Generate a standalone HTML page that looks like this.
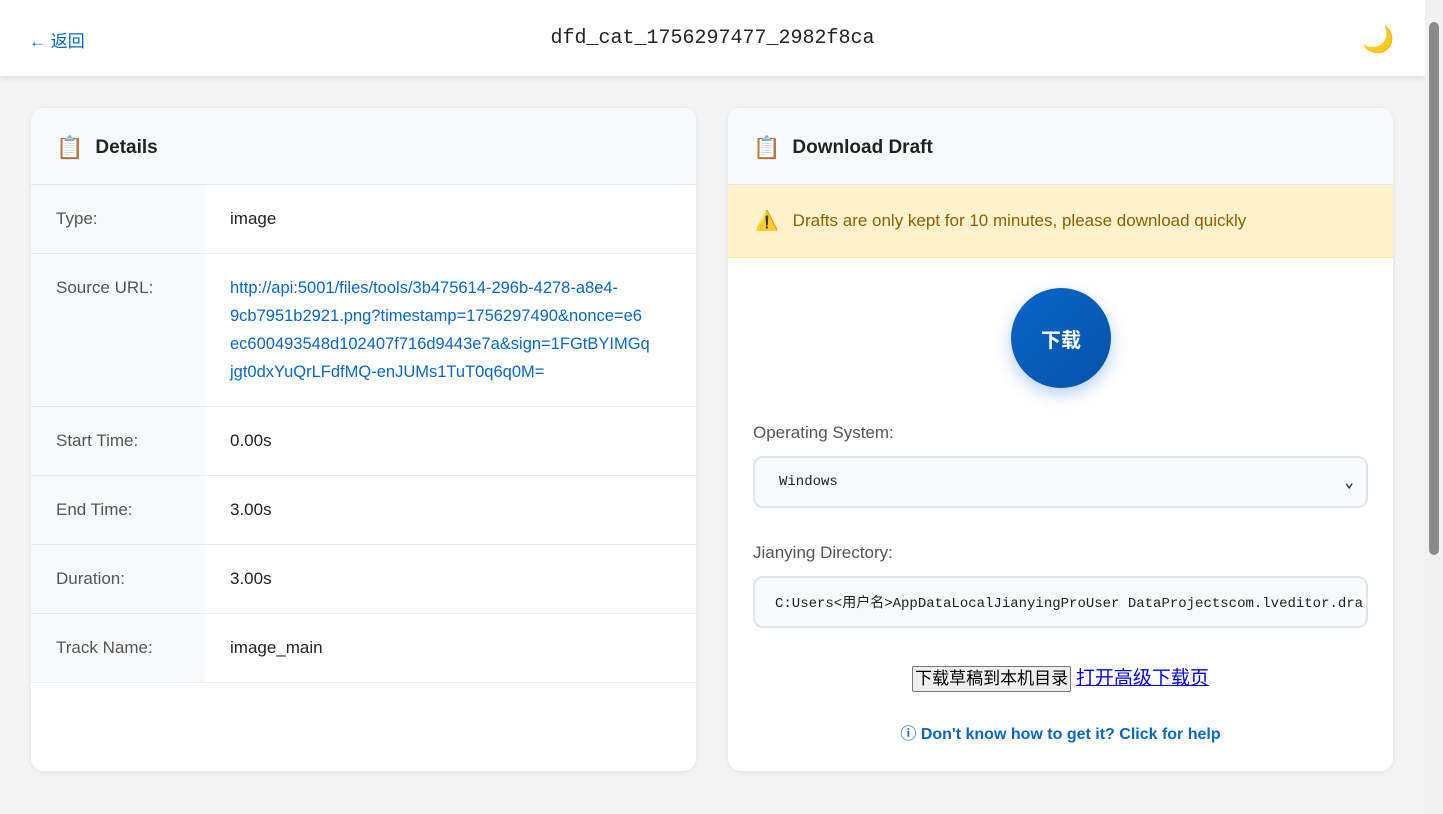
<!DOCTYPE html>
<html><head><meta charset="utf-8"><style>
*{box-sizing:border-box;margin:0;padding:0}
body{width:1443px;height:814px;overflow:hidden;background:#f3f3f3;font-family:"Liberation Sans","Noto Sans CJK SC",sans-serif;position:relative}
.hdr{position:absolute;left:0;top:0;width:1425px;height:76px;background:#fff;box-shadow:0 2px 6px rgba(0,0,0,.1)}
.back{position:absolute;left:29px;top:27px;color:#0b66c2;font-size:17px}
.title{position:absolute;left:0;width:1425px;top:27px;text-align:center;font-family:"Liberation Mono",monospace;font-size:20px;color:#222}
.moon{position:absolute;left:1362px;top:24px;font-size:26px;color:#f5b800}
.sb{position:absolute;left:1425px;top:0;width:18px;height:814px;background:#f1f1f1}
.thumb{position:absolute;left:1429px;top:22px;width:10px;height:533px;background:#8a8a8a;border-radius:5px}
.card{position:absolute;top:108px;width:665px;height:663px;background:#fff;border-radius:12px;box-shadow:0 1px 5px rgba(0,0,0,.08);overflow:hidden}
.ch{height:77px;background:#f8f9fa;border-bottom:1px solid #e3e6ea;display:flex;align-items:center;padding-left:25px;font-size:19px;font-weight:bold;color:#222;padding-top:4px}
.ch span.i{font-size:22px;margin-right:12px}
.row{display:flex;border-bottom:1px solid #e9ecef;font-size:17px}
.row .l{width:174px;background:#f8f9fa;color:#555;padding:19px 25px;line-height:30px}
.row .v{flex:1;padding:19px 25px;color:#222;line-height:28px;padding-top:20px;padding-bottom:20px}
.warn{height:73px;background:#fff3cd;border-bottom:1px solid #ffe69c;display:flex;align-items:center;padding-left:27px;color:#8a6100;font-size:17px}
.btn{position:absolute;left:283px;top:180px;width:100px;height:100px;border-radius:50%;background:linear-gradient(135deg,#0a66c8,#0652a8);box-shadow:0 6px 16px rgba(10,102,200,.3);color:#fff;font-weight:bold;font-size:20px;display:flex;align-items:center;justify-content:center}
.lab{position:absolute;left:25px;font-size:17px;color:#555}
.inp{position:absolute;left:25px;width:615px;height:52px;border:2px solid #e0e3e8;border-radius:10px;background:#f8f9fa;font-family:"Liberation Mono","Noto Sans CJK SC",monospace;font-size:14px;color:#222;padding-left:24px;display:flex;align-items:center}
</style></head><body>
<div class="hdr"><div class="back">← 返回</div><div class="title">dfd_cat_1756297477_2982f8ca</div><div class="moon">🌙</div></div>
<div class="card" style="left:31px">
<div class="ch"><span class="i">📋</span>Details</div>
<div class="row" style="height:69px"><div class="l">Type:</div><div class="v">image</div></div>
<div class="row" style="height:153px"><div class="l">Source URL:</div><div class="v" style="color:#0b66c2;white-space:nowrap;font-size:16.5px">http://api:5001/files/tools/3b475614-296b-4278-a8e4-<br>9cb7951b2921.png?timestamp=1756297490&amp;nonce=e6<br>ec600493548d102407f716d9443e7a&amp;sign=1FGtBYIMGq<br>jgt0dxYuQrLFdfMQ-enJUMs1TuT0q6q0M=</div></div>
<div class="row" style="height:69px"><div class="l">Start Time:</div><div class="v">0.00s</div></div>
<div class="row" style="height:69px"><div class="l">End Time:</div><div class="v">3.00s</div></div>
<div class="row" style="height:69px"><div class="l">Duration:</div><div class="v">3.00s</div></div>
<div class="row" style="height:69px"><div class="l">Track Name:</div><div class="v">image_main</div></div>
</div>
<div class="card" style="left:728px">
<div class="ch"><span class="i">📋</span>Download Draft</div>
<div class="warn"><span style="font-size:19px;margin-right:14px">⚠️</span>Drafts are only kept for 10 minutes, please download quickly</div>
<div class="btn">下载</div>
<div class="lab" style="top:315px">Operating System:</div>
<div class="inp" style="top:348px;justify-content:space-between;padding-right:12px">Windows<span style="font-size:16px;font-weight:bold">⌄</span></div>
<div class="lab" style="top:435px">Jianying Directory:</div>
<div class="inp" style="top:468px;overflow:hidden;white-space:nowrap;padding-left:20px">C:Users&lt;用户名&gt;AppDataLocalJianyingProUser DataProjectscom.lveditor.dra:</div>
<div style="position:absolute;left:0;width:665px;top:555px;text-align:center;font-size:17px">
<span style="display:inline-block;border:1px solid #777;background:#efefef;border-radius:2px;padding:0 2px;font-size:17px;line-height:24px">下载草稿到本机目录</span> <span style="color:#0000ee;text-decoration:underline;font-size:19px">打开高级下载页</span></div>
<div style="position:absolute;left:0;width:665px;top:612px;text-align:center;font-size:16px;font-weight:bold;color:#0b66c2">ⓘ Don't know how to get it? Click for help</div>
</div>
<div class="sb"></div><div class="thumb"></div>
</body></html>
